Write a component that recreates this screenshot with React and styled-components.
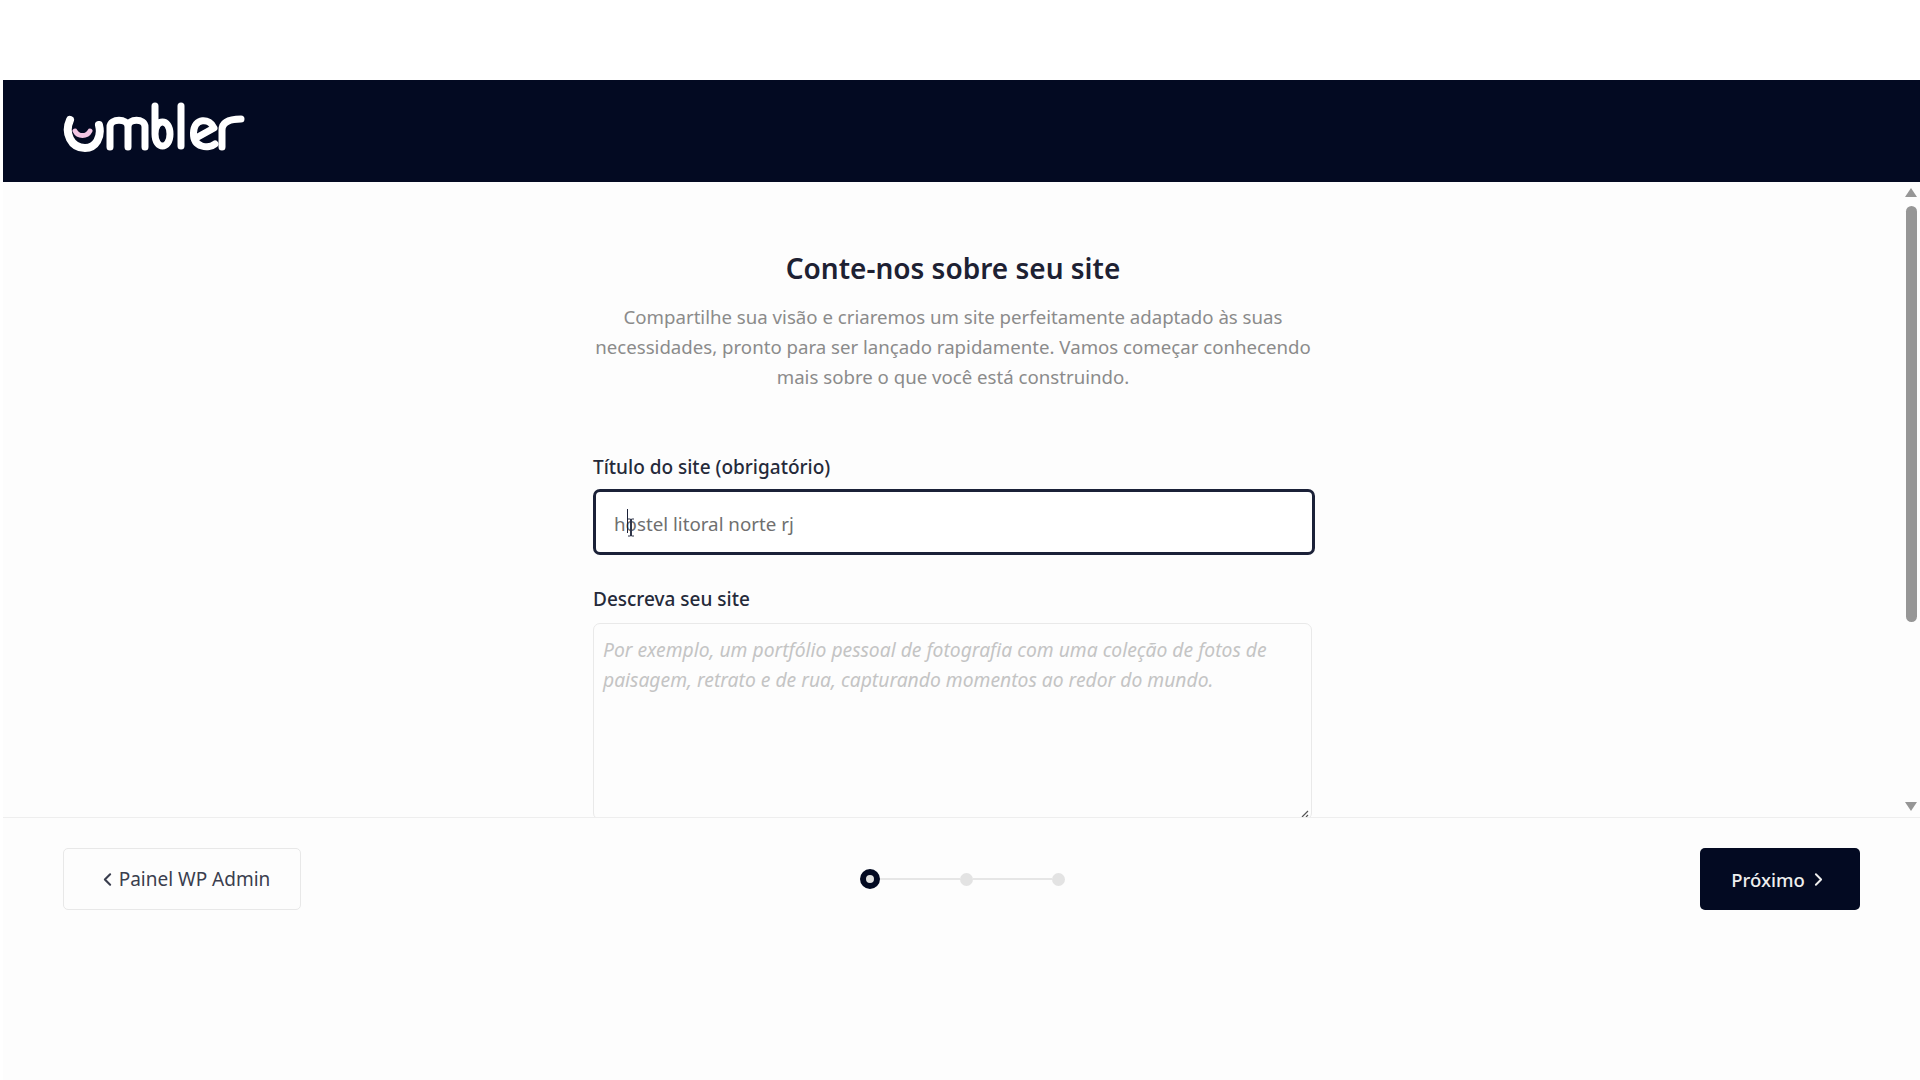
import styled, { createGlobalStyle } from 'styled-components';
import { ChevronLeft, ChevronRight } from 'lucide-react';

const GlobalStyle = createGlobalStyle`
  html, body {
    margin: 0;
    padding: 0;
    background: #ffffff;
    overflow: hidden;
  }
  * {
    box-sizing: border-box;
  }
`;

const Page = styled.div`
  width: 1920px;
  height: 1080px;
  padding-top: 80px;
  display: flex;
  flex-direction: column;
  font-family: "Noto Sans", sans-serif;
  background: #ffffff;
  overflow: hidden;
`;

const Header = styled.header`
  height: 102px;
  margin-left: 3px;
  padding-left: 60px;
  flex-shrink: 0;
  display: flex;
  align-items: center;
  background: #030a22;
`;

const LogoMark = styled.svg`
  margin-bottom: 8px;
`;

const Body = styled.div`
  height: 636px;
  margin-left: 3px;
  flex-shrink: 0;
  display: flex;
  background: #fdfdfd;
  border-bottom: 1px solid #eeeeee;
  overflow: hidden;
`;

const Content = styled.main`
  flex: 1;
  display: flex;
  flex-direction: column;
  align-items: center;
  padding-top: 68px;
`;

const Title = styled.h1`
  margin: 0;
  font-size: 28px;
  line-height: 36px;
  font-weight: 600;
  color: #1d2133;
`;

const Intro = styled.p`
  width: 730px;
  margin: 16px 0 0;
  font-size: 18.65px;
  line-height: 30px;
  text-align: center;
  color: #8b8b8b;
`;

const Form = styled.form`
  width: 722px;
  margin: 61px 0 0 2px;
  display: flex;
  flex-direction: column;
`;

const Label = styled.label`
  font-size: 19px;
  line-height: 28px;
  font-weight: 500;
  color: #252a3a;
`;

const TitleField = styled.div`
  height: 66px;
  margin: 8px 0 30px;
  padding: 2px 18px 0;
  display: flex;
  align-items: center;
  position: relative;
  border: 3px solid #1b2138;
  border-radius: 7px;
  background: #ffffff;
  font-size: 18.75px;
  color: #6f6f6f;
`;

const TextCursor = styled.span`
  position: absolute;
  left: 31px;
  top: 17px;
  width: 1px;
  height: 24px;
  background: #1b2138;
`;

const MouseCaret = styled.svg`
  position: absolute;
  left: 31px;
  top: 26px;
`;

const DescribeField = styled.div`
  width: 719px;
  height: 197px;
  margin-top: 10px;
  padding: 11px 9px;
  position: relative;
  border: 1px solid #e9e9e9;
  border-radius: 7px;
  font-size: 19.3px;
  line-height: 30px;
  font-style: italic;
  color: #c4c4c4;
`;

const ResizeHandle = styled.svg`
  position: absolute;
  right: 2px;
  bottom: 1px;
`;

const ScrollTrack = styled.div`
  width: 16px;
  margin-right: 1px;
  flex-shrink: 0;
  padding: 6px 0;
  display: flex;
  flex-direction: column;
  align-items: center;
`;

const Arrow = styled.div`
  width: 0;
  height: 0;
  border-left: 6px solid transparent;
  border-right: 6px solid transparent;
  ${(props) =>
    props.$down
      ? 'border-top: 9px solid #969696; margin-top: auto;'
      : 'border-bottom: 9px solid #969696;'}
`;

const Thumb = styled.div`
  width: 11px;
  height: 416px;
  margin-top: 9px;
  border-radius: 6px;
  background: #969696;
`;

const Footer = styled.footer`
  flex: 1;
  margin-left: 3px;
  padding: 30px 60px 0;
  display: flex;
  justify-content: space-between;
  align-items: flex-start;
  background: #fdfdfd;
`;

const BackButton = styled.button`
  width: 238px;
  height: 62px;
  padding-left: 9px;
  display: flex;
  align-items: center;
  justify-content: center;
  gap: 1px;
  border: 1px solid #e8e8e8;
  border-radius: 5px;
  background: #fdfdfd;
  font-family: inherit;
  font-size: 19px;
  color: #3a3e4e;
`;

const NextButton = styled.button`
  width: 160px;
  height: 62px;
  display: flex;
  align-items: center;
  justify-content: center;
  gap: 3px;
  border: none;
  border-radius: 5px;
  background: #030a22;
  font-family: inherit;
  font-size: 18.5px;
  font-weight: 500;
  color: #eeeeee;
`;

const Steps = styled.div`
  height: 62px;
  margin-right: 76px;
  display: flex;
  align-items: center;
`;

const Dot = styled.span`
  width: 13px;
  height: 13px;
  border-radius: 50%;
  background: #e3e3e3;
`;

const ActiveDot = styled.span`
  width: 20px;
  height: 20px;
  border-radius: 50%;
  background: #e0e0e0;
  border: 6px solid #030a22;
`;

const StepLine = styled.span`
  width: ${(props) => props.$width}px;
  height: 2px;
  background: #e6e6e6;
`;

function Logo() {
  return (
    <LogoMark width="186" height="56" viewBox="0 0 186 56" fill="none" stroke="#ffffff" strokeWidth="7" strokeLinecap="round" strokeLinejoin="round">
      <path d="M7 21 C1 34 8 49 22 49 C33 49 39 38 36 26" strokeWidth="8" />
      <path d="M12 32 C15 38 24 38 27 32" stroke="#f3c6e4" strokeWidth="5" />
      <path d="M47 48 V28 C47 19 65 19 65 28 V48 M65 28 C65 19 82 19 82 28 V48" />
      <path d="M92 7 V35 C92 51 107 51 107 35 C107 19 92 19 92 35" />
      <path d="M118 7 V47" />
      <path d="M133 39 L151 29 C147 19 131 18 130.5 34 C130 49 146 50 152 45" />
      <path d="M159 48 V31 C159 23 167 20 178 20" />
    </LogoMark>
  );
}

export default function App() {
  return (
    <Page>
      <GlobalStyle />
      <Header>
        <Logo />
      </Header>
      <Body>
        <Content>
          <Title>Conte-nos sobre seu site</Title>
          <Intro>
            Compartilhe sua visão e criaremos um site perfeitamente adaptado às suas necessidades, pronto para ser lançado rapidamente. Vamos começar conhecendo mais sobre o que você está construindo.
          </Intro>
          <Form>
            <Label>Título do site (obrigatório)</Label>
            <TitleField>
              hostel litoral norte rj
              <TextCursor />
              <MouseCaret width="8" height="19" viewBox="0 0 8 19" fill="none" stroke="#30364a" strokeWidth="1">
                <path d="M1 1 H3.5 V18 H1 M7 1 H4.5 V18 H7" />
              </MouseCaret>
            </TitleField>
            <Label>Descreva seu site</Label>
            <DescribeField>
              Por exemplo, um portfólio pessoal de fotografia com uma coleção de fotos de paisagem, retrato e de rua, capturando momentos ao redor do mundo.
              <ResizeHandle width="8" height="8" viewBox="0 0 8 8" fill="none" stroke="#555555" strokeWidth="1.2">
                <path d="M1 7 L7 1 M5 7 L7 5" />
              </ResizeHandle>
            </DescribeField>
          </Form>
        </Content>
        <ScrollTrack>
          <Arrow />
          <Thumb />
          <Arrow $down />
        </ScrollTrack>
      </Body>
      <Footer>
        <BackButton>
          <ChevronLeft size={21} strokeWidth={2.4} />
          Painel WP Admin
        </BackButton>
        <Steps>
          <ActiveDot />
          <StepLine $width={80} />
          <Dot />
          <StepLine $width={79} />
          <Dot />
        </Steps>
        <NextButton>
          Próximo
          <ChevronRight size={21} strokeWidth={2.2} />
        </NextButton>
      </Footer>
    </Page>
  );
}
